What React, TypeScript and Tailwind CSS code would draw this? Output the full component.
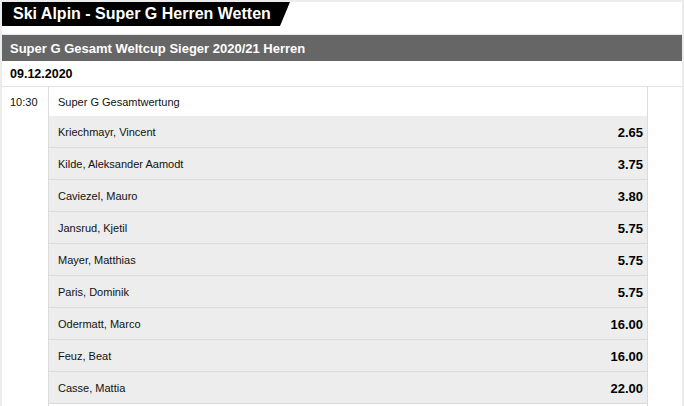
import React from "react";

const rows: [string, string][] = [
  ["Kriechmayr, Vincent", "2.65"],
  ["Kilde, Aleksander Aamodt", "3.75"],
  ["Caviezel, Mauro", "3.80"],
  ["Jansrud, Kjetil", "5.75"],
  ["Mayer, Matthias", "5.75"],
  ["Paris, Dominik", "5.75"],
  ["Odermatt, Marco", "16.00"],
  ["Feuz, Beat", "16.00"],
  ["Casse, Mattia", "22.00"],
];

export default function App() {
  return (
    <div className="w-[684px] h-[406px] bg-[#ececec] pt-[2px] px-[2px] overflow-hidden font-['Liberation_Sans',Arial,sans-serif] text-[#111111]">
      <div className="bg-white h-full flex flex-col">
        <div className="h-[24px] w-[288px] bg-black text-white font-bold text-[16px] leading-[24px] pl-[11px] [clip-path:polygon(0_0,100%_0,calc(100%-10px)_100%,0_100%)]">
          Ski Alpin - Super G Herren Wetten
        </div>
        <div className="mt-[8px] border-t border-[#e6e6e6] h-[27px] bg-[#666666] text-white font-bold text-[13px] flex items-center pl-[8px] pt-[2px]">
          Super G Gesamt Weltcup Sieger 2020/21 Herren
        </div>
        <div className="h-[26px] border-b border-[#e2e2e2] flex items-center pl-[8px] pt-[2px] font-bold text-[12.5px] text-black">
          09.12.2020
        </div>
        <div className="flex flex-1">
          <div className="w-[47px] border-r border-[#dcdcdc]">
            <div className="h-[29px] flex items-center pl-[8px] pt-[2px] text-[11px]">10:30</div>
          </div>
          <div className="w-[599px] border-r border-[#dcdcdc] flex flex-col">
            <div className="h-[29px] flex items-center pl-[9px] pt-[2px] text-[11px]">Super G Gesamtwertung</div>
            {rows.map(([name, odd]) => (
              <div
                key={name}
                className="h-[32px] shrink-0 border-b border-[#dadada] bg-[#ededed] flex items-center justify-between pl-[9px] pr-[4px] pt-[2px]"
              >
                <span className="text-[11px]">{name}</span>
                <span className="text-[13px] font-bold text-black">{odd}</span>
              </div>
            ))}
          </div>
          <div className="flex-1" />
        </div>
      </div>
    </div>
  );
}
